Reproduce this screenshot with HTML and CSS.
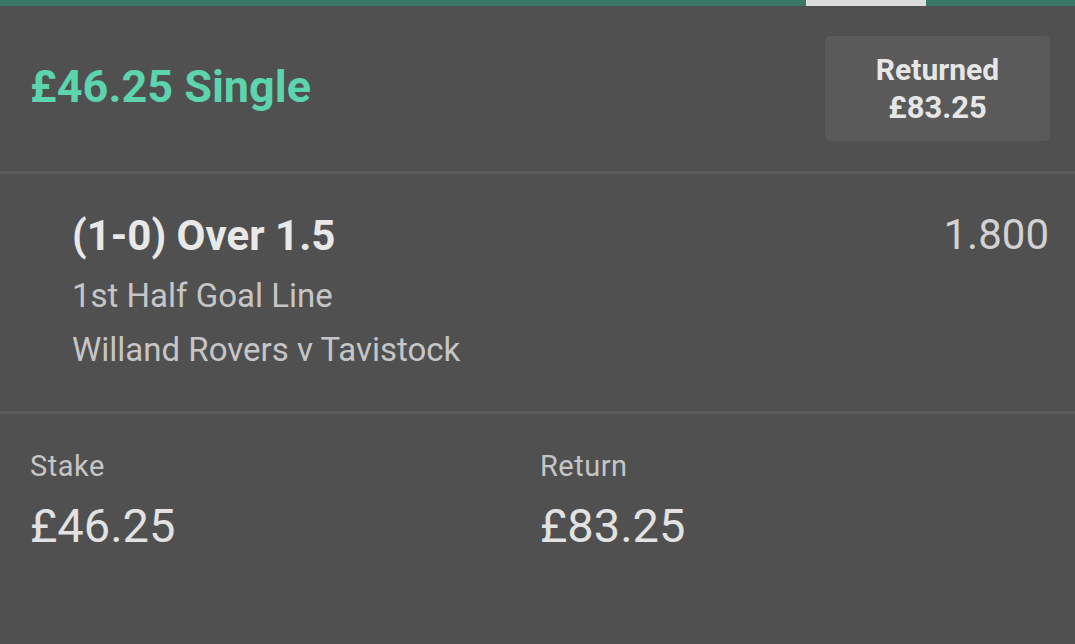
FILE: index.html
```html
<!DOCTYPE html>
<html>
<head>
<meta charset="utf-8">
<link rel="stylesheet" href="styles.css">
</head>
<body>
<div class="topbar">
  <div class="seg seg-a"></div>
  <div class="seg seg-b"></div>
  <div class="seg seg-c"></div>
</div>
<div class="header">
  <div class="title">£46.25 Single</div>
  <div class="returned">
    <div>Returned</div>
    <div class="returned-amount">£83.25</div>
  </div>
</div>
<div class="selection">
  <div class="sel-main">
    <div class="sel-name">(1-0) Over 1.5</div>
    <div class="sel-market">1st Half Goal Line</div>
    <div class="sel-event">Willand Rovers v Tavistock</div>
  </div>
  <div class="odds">1.800</div>
</div>
<div class="totals">
  <div class="col col-stake">
    <div class="label">Stake</div>
    <div class="value">£46.25</div>
  </div>
  <div class="col">
    <div class="label">Return</div>
    <div class="value">£83.25</div>
  </div>
</div>
</body>
</html>
```

FILE: styles.css
```css
html, body {
  margin: 0;
  padding: 0;
  background: #505050;
  font-family: Roboto, "Noto Sans", sans-serif;
  width: 1075px;
  height: 644px;
  overflow: hidden;
}
.topbar {
  display: flex;
  height: 6px;
}
.seg-a { width: 806px; background: #387866; }
.seg-b { width: 120px; background: #dcdcdc; }
.seg-c { flex: 1; background: #387866; }
.header {
  display: flex;
  align-items: center;
  justify-content: space-between;
  height: 165px;
  padding: 0 25px 0 30px;
  border-bottom: 3px solid #5c5c5c;
}
.title {
  color: #5cd4ae;
  font-weight: 700;
  font-size: 45px;
  margin-top: -4px;
}
.returned {
  width: 225px;
  height: 105px;
  background: #5a5a5a;
  border-radius: 5px;
  display: flex;
  flex-direction: column;
  justify-content: center;
  align-items: center;
  color: #e6e6e6;
  font-weight: 700;
  font-size: 30px;
  line-height: 38px;
}
.returned-amount {
  font-size: 31px;
}
.selection {
  display: flex;
  justify-content: space-between;
  height: 237px;
  padding: 0 26px 0 72px;
  border-bottom: 3px solid #5c5c5c;
}
.sel-main {
  padding-top: 38px;
}
.sel-name {
  color: #e8e8e8;
  font-weight: 700;
  font-size: 42px;
  line-height: 48px;
}
.sel-market {
  margin-top: 9px;
}
.sel-market, .sel-event {
  color: #c6c6c6;
  font-size: 33px;
  line-height: 54px;
}
.odds {
  padding-top: 37px;
  color: #d2d2d2;
  font-size: 42px;
  line-height: 48px;
}
.totals {
  display: flex;
  padding: 35px 30px 0 30px;
}
.col {
  flex: 1;
}
.col-stake {
  flex: 0 0 510px;
}
.label {
  color: #c6c6c6;
  font-size: 29px;
  line-height: 34px;
  letter-spacing: 0.5px;
}
.value {
  color: #e2e2e2;
  font-size: 47px;
  line-height: 60px;
  margin-top: 13px;
}
```
